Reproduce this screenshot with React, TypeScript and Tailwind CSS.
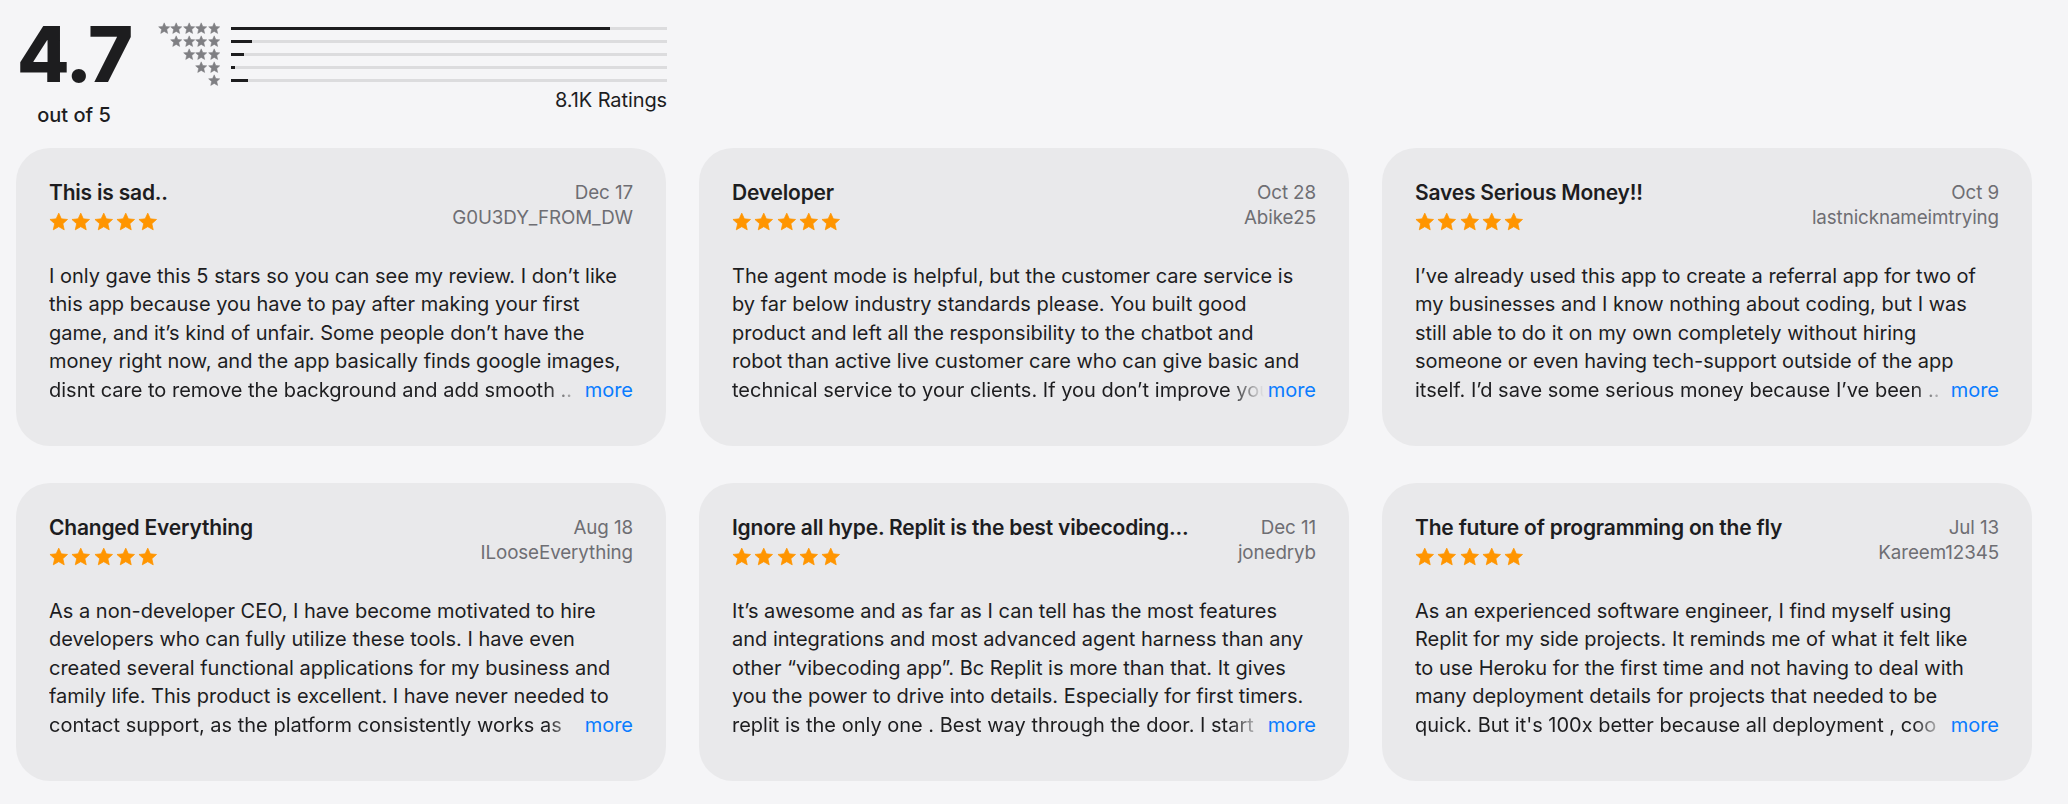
import React from "react";

const STAR_POINTS =
  "10,1.2 12.65,7.05 19,7.65 14.2,11.95 15.6,18.3 10,15 4.4,18.3 5.8,11.95 1,7.65 7.35,7.05";

function Star({ className, fill }: { className: string; fill: string }) {
  return (
    <svg viewBox="0 0 20 20" className={className} aria-hidden="true">
      <polygon points={STAR_POINTS} fill={fill} strokeLinejoin="round" stroke={fill} strokeWidth="0.8" />
    </svg>
  );
}

const histogram = [
  { stars: 5, pct: 87 },
  { stars: 4, pct: 4.8 },
  { stars: 3, pct: 3 },
  { stars: 2, pct: 1 },
  { stars: 1, pct: 4 },
];

type Review = {
  title: string;
  date: string;
  user: string;
  lines: string[];
};

const reviews: Review[] = [
  {
    title: "This is sad..",
    date: "Dec 17",
    user: "G0U3DY_FROM_DW",
    lines: [
      "I only gave this 5 stars so you can see my review. I don’t like",
      "this app because you have to pay after making your first",
      "game, and it’s kind of unfair. Some people don’t have the",
      "money right now, and the app basically finds google images,",
      "disnt care to remove the background and add smooth ..",
    ],
  },
  {
    title: "Developer",
    date: "Oct 28",
    user: "Abike25",
    lines: [
      "The agent mode is helpful, but the customer care service is",
      "by far below industry standards please. You built good",
      "product and left all the responsibility to the chatbot and",
      "robot than active live customer care who can give basic and",
      "technical service to your clients. If you don’t improve your",
    ],
  },
  {
    title: "Saves Serious Money!!",
    date: "Oct 9",
    user: "lastnicknameimtrying",
    lines: [
      "I’ve already used this app to create a referral app for two of",
      "my businesses and I know nothing about coding, but I was",
      "still able to do it on my own completely without hiring",
      "someone or even having tech-support outside of the app",
      "itself. I’d save some serious money because I’ve been ..",
    ],
  },
  {
    title: "Changed Everything",
    date: "Aug 18",
    user: "ILooseEverything",
    lines: [
      "As a non-developer CEO, I have become motivated to hire",
      "developers who can fully utilize these tools. I have even",
      "created several functional applications for my business and",
      "family life. This product is excellent. I have never needed to",
      "contact support, as the platform consistently works as",
    ],
  },
  {
    title: "Ignore all hype. Replit is the best vibecoding...",
    date: "Dec 11",
    user: "jonedryb",
    lines: [
      "It’s awesome and as far as I can tell has the most features",
      "and integrations and most advanced agent harness than any",
      "other “vibecoding app”. Bc Replit is more than that. It gives",
      "you the power to drive into details. Especially for first timers.",
      "replit is the only one . Best way through the door. I start",
    ],
  },
  {
    title: "The future of programming on the fly",
    date: "Jul 13",
    user: "Kareem12345",
    lines: [
      "As an experienced software engineer, I find myself using",
      "Replit for my side projects. It reminds me of what it felt like",
      "to use Heroku for the first time and not having to deal with",
      "many deployment details for projects that needed to be",
      "quick. But it's 100x better because all deployment , coo",
    ],
  },
];

function ReviewCard({ r }: { r: Review }) {
  const last = r.lines[r.lines.length - 1];
  return (
    <div className="h-[298px] rounded-[34px] bg-[#e9e9eb] px-[33px] pt-[32px]">
      <div className="flex items-start justify-between">
        <div className="min-w-0">
          <div className="whitespace-nowrap text-[21px] font-semibold leading-[26px] tracking-[-0.2px] text-[#1d1d1f]">
            {r.title}
          </div>
          <div className="mt-[6px] flex gap-[2.8px]">
            {[0, 1, 2, 3, 4].map((i) => (
              <Star key={i} className="h-[19.5px] w-[19.5px]" fill="#ff9500" />
            ))}
          </div>
        </div>
        <div className="ml-6 flex shrink-0 flex-col items-end text-[18.8px] leading-[25px] tracking-[-0.1px] text-[#6e6e73]">
          <div>{r.date}</div>
          <div>{r.user}</div>
        </div>
      </div>
      <div className="mt-[30px] text-[20px] leading-[28.6px] text-[#1d1d1f]">
        {r.lines.slice(0, -1).map((l, i) => (
          <div key={i} className="overflow-hidden whitespace-nowrap">
            {l}
          </div>
        ))}
        <div className="flex items-center">
          <span className="min-w-0 flex-1 overflow-hidden whitespace-nowrap [mask-image:linear-gradient(to_right,black_calc(100%-34px),transparent)]">
            {last}
          </span>
          <span className="ml-[4px] shrink-0 text-[#0a7cff]">more</span>
        </div>
      </div>
    </div>
  );
}

export default function App() {
  return (
    <div className="h-[804px] w-[2068px] overflow-hidden bg-[#f5f5f7] pl-4 pt-[13px] font-['Inter',sans-serif]">
      <div className="flex h-[135px] w-[651px] items-start">
        <div className="flex w-[116px] flex-col items-center">
          <div className="pt-[2px] text-[77px] font-extrabold leading-[78px] tracking-[-2px] text-[#1d1d1f]">4.7</div>
          <div className="mt-[10px] text-[20px] font-medium leading-[24px] text-[#1d1d1f]">out of 5</div>
        </div>
        <div className="mt-[9px] flex flex-1 flex-col">
          {histogram.map((h) => (
            <div key={h.stars} className="flex h-[13px] items-center">
              <div className="flex w-[88px] justify-end">
                {Array.from({ length: h.stars }).map((_, i) => (
                  <Star key={i} className="h-[12.6px] w-[12.4px]" fill="#7f7f83" />
                ))}
              </div>
              <div className="ml-[11px] h-[3px] flex-1 bg-[#dcdcde]">
                <div className="h-full bg-[#1d1d1f]" style={{ width: `${h.pct}%` }} />
              </div>
            </div>
          ))}
          <div className="mt-[1px] text-right text-[20px] leading-[24px] tracking-[-0.1px] text-[#1d1d1f]">8.1K Ratings</div>
        </div>
      </div>
      <div className="grid grid-cols-[repeat(3,650px)] gap-x-[33px] gap-y-[37px]">
        {reviews.map((r, i) => (
          <ReviewCard key={i} r={r} />
        ))}
      </div>
    </div>
  );
}
